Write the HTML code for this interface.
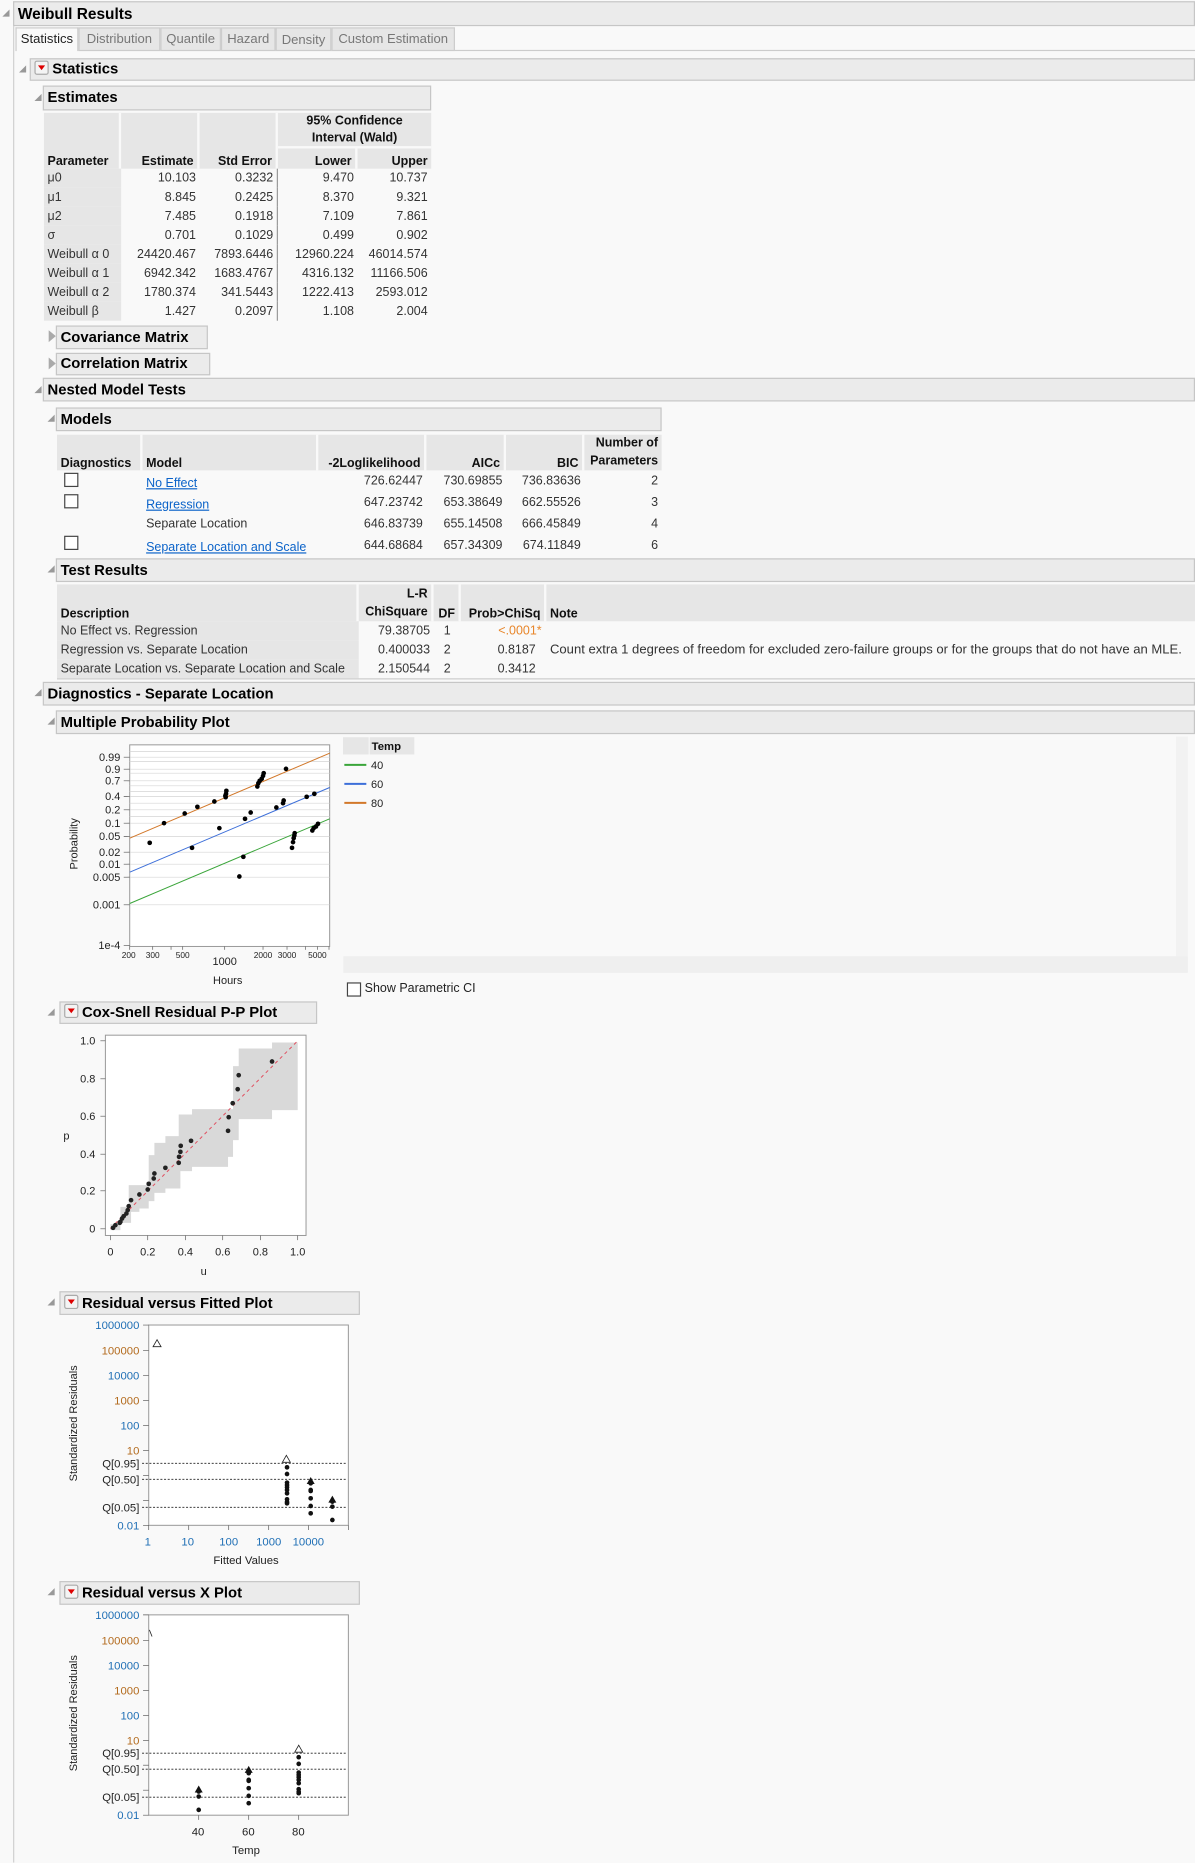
<!DOCTYPE html>
<html><head><meta charset="utf-8"><style>
html,body{margin:0;padding:0;background:#f9f9f9;overflow:hidden;width:1195px;height:1862px}
#s{position:absolute;left:0;top:0;width:1006px;height:1568px;transform:scale(1.18787);transform-origin:0 0;font-family:"Liberation Sans",sans-serif;font-size:10.5px;color:#222}
.a{position:absolute}
.hd{position:absolute;background:#ebebeb;border:1px solid #c6c6c6;box-sizing:border-box;font-weight:bold;font-size:12.5px;color:#000;padding-left:3px;line-height:17px;white-space:nowrap}
.tri{position:absolute;width:0;height:0;border-left:6px solid transparent;border-bottom:6px solid #999}
.rt{position:absolute;width:0;height:0;border-top:5px solid transparent;border-bottom:5px solid transparent;border-left:6px solid #aaa}
.menu{display:inline-block;width:10px;height:10px;border:1px solid #aaa;border-radius:2px;background:#f4f4f4;position:relative;vertical-align:-1px;margin-right:3px}
.menu:after{content:"";position:absolute;left:2px;top:3px;border-left:3px solid transparent;border-right:3px solid transparent;border-top:4px solid #d00}
.tab{position:absolute;top:23px;height:20px;background:#e6e6e6;border:1px solid #ccc;box-sizing:border-box;color:#777;font-size:11px;line-height:19px;text-align:center}
table{border-collapse:separate;border-spacing:0;font-size:10.5px;position:absolute}
td,th{padding:0 3px;white-space:nowrap}
th{background:#e6e6e6;font-weight:bold;color:#111;vertical-align:bottom;border-right:2px solid #f9f9f9}
td{text-align:right;color:#333}
td.l{text-align:left}
td.g{background:#e6e6e6;text-align:left}
a{color:#0b63c9;text-decoration:underline}
.cb{display:inline-block;width:10px;height:10px;border:1px solid #444;background:#fff}
</style></head><body><div id="s">
<div class="a" style="left:11px;top:21px;width:1px;height:1547px;background:#d0d0d0"></div>
<div class="tri" style="left:2px;top:8px"></div>
<div class="hd" style="left:11px;top:1px;width:995px;height:21px;line-height:19px;font-size:13px">Weibull Results</div>

<div class="tab" style="left:13px;width:53px;background:#f9f9f9;color:#222;border-bottom:none">Statistics</div>
<div class="tab" style="left:66px;width:69px">Distribution</div>
<div class="tab" style="left:135px;width:51px">Quantile</div>
<div class="tab" style="left:186px;width:46px">Hazard</div>
<div class="tab" style="left:232px;width:47px;line-height:21px">Density</div>
<div class="tab" style="left:279px;width:104px">Custom Estimation</div>
<div class="a" style="left:383px;top:42px;width:623px;height:1px;background:#ccc"></div>

<div class="tri" style="left:16px;top:55px"></div>
<div class="hd" style="left:25px;top:49px;width:981px;height:19px"><span class="menu"></span>Statistics</div>

<div class="tri" style="left:29px;top:79px"></div>
<div class="hd" style="left:36px;top:72px;width:327px;height:21px;line-height:19px">Estimates</div>

<table style="left:37px;top:95px;width:326px">
<tr style="height:29px"><th rowspan="2" style="text-align:left;width:57px">Parameter</th><th rowspan="2" style="text-align:right;width:58px">Estimate</th><th rowspan="2" style="text-align:right;width:58px">Std Error</th><th colspan="2" style="text-align:center;vertical-align:middle;border-bottom:2px solid #f9f9f9;line-height:14px;border-right:none">95% Confidence<br>Interval (Wald)</th></tr>
<tr style="height:17px"><th style="text-align:right;width:59px">Lower</th><th style="text-align:right;border-right:none">Upper</th></tr>
<tr style="height:16px"><td class="g">μ0</td><td>10.103</td><td style="border-right:1px solid #999">0.3232</td><td>9.470</td><td>10.737</td></tr>
<tr style="height:16px"><td class="g">μ1</td><td>8.845</td><td style="border-right:1px solid #999">0.2425</td><td>8.370</td><td>9.321</td></tr>
<tr style="height:16px"><td class="g">μ2</td><td>7.485</td><td style="border-right:1px solid #999">0.1918</td><td>7.109</td><td>7.861</td></tr>
<tr style="height:16px"><td class="g">σ</td><td>0.701</td><td style="border-right:1px solid #999">0.1029</td><td>0.499</td><td>0.902</td></tr>
<tr style="height:16px"><td class="g">Weibull α 0</td><td>24420.467</td><td style="border-right:1px solid #999">7893.6446</td><td>12960.224</td><td>46014.574</td></tr>
<tr style="height:16px"><td class="g">Weibull α 1</td><td>6942.342</td><td style="border-right:1px solid #999">1683.4767</td><td>4316.132</td><td>11166.506</td></tr>
<tr style="height:16px"><td class="g">Weibull α 2</td><td>1780.374</td><td style="border-right:1px solid #999">341.5443</td><td>1222.413</td><td>2593.012</td></tr>
<tr style="height:16px"><td class="g">Weibull β</td><td>1.427</td><td style="border-right:1px solid #999">0.2097</td><td>1.108</td><td>2.004</td></tr>
</table>

<div class="rt" style="left:41px;top:278px"></div>
<div class="hd" style="left:47px;top:274px;width:128px;height:20px;line-height:18px">Covariance Matrix</div>
<div class="rt" style="left:41px;top:301px"></div>
<div class="hd" style="left:47px;top:297px;width:130px;height:19px">Correlation Matrix</div>

<div class="tri" style="left:29px;top:325px"></div>
<div class="hd" style="left:36px;top:318px;width:970px;height:20px;line-height:18px">Nested Model Tests</div>

<div class="tri" style="left:40px;top:349px"></div>
<div class="hd" style="left:47px;top:343px;width:510px;height:20px;line-height:18px">Models</div>

<table style="left:48px;top:366px;width:509px">
<tr style="height:30px"><th style="text-align:left;width:64px">Diagnostics</th><th style="text-align:left;width:140px">Model</th><th style="text-align:right;width:83px">-2Loglikelihood</th><th style="text-align:right;width:59px">AICc</th><th style="text-align:right;width:58px">BIC</th><th style="text-align:right;border-right:none;line-height:15px">Number of<br>Parameters</th></tr>
<tr style="height:18px"><td class="l" style="padding-left:6px"><span class="cb"></span></td><td class="l" style="padding-top:3px"><a>No Effect</a></td><td>726.62447</td><td>730.69855</td><td>736.83636</td><td>2</td></tr>
<tr style="height:18px"><td class="l" style="padding-left:6px"><span class="cb"></span></td><td class="l" style="padding-top:4px"><a>Regression</a></td><td>647.23742</td><td>653.38649</td><td>662.55526</td><td>3</td></tr>
<tr style="height:17px"><td></td><td class="l">Separate Location</td><td>646.83739</td><td>655.14508</td><td>666.45849</td><td>4</td></tr>
<tr style="height:19px"><td class="l" style="padding-left:6px"><span class="cb"></span></td><td class="l" style="padding-top:4px"><a>Separate Location and Scale</a></td><td>644.68684</td><td>657.34309</td><td>674.11849</td><td>6</td></tr>
</table>

<div class="tri" style="left:40px;top:476px"></div>
<div class="hd" style="left:47px;top:470px;width:959px;height:20px;line-height:18px">Test Results</div>

<table style="left:48px;top:492px;width:958px">
<tr style="height:31px"><th style="text-align:left;width:246px">Description</th><th style="text-align:right;width:55px;line-height:15px">L-R<br>ChiSquare</th><th style="text-align:right;width:15px">DF</th><th style="text-align:right;width:64px">Prob&gt;ChiSq</th><th style="text-align:left;border-right:none">Note</th></tr>
<tr style="height:16px"><td class="g">No Effect vs. Regression</td><td>79.38705</td><td style="text-align:center">1</td><td style="color:#e8862a;padding-right:4px">&lt;.0001*</td><td class="l"></td></tr>
<tr style="height:16px"><td class="g">Regression vs. Separate Location</td><td>0.400033</td><td style="text-align:center">2</td><td style="padding-right:9px">0.8187</td><td class="l" style="font-size:11px">Count extra 1 degrees of freedom for excluded zero-failure groups or for the groups that do not have an MLE.</td></tr>
<tr style="height:16px"><td class="g">Separate Location vs. Separate Location and Scale</td><td>2.150544</td><td style="text-align:center">2</td><td style="padding-right:9px">0.3412</td><td class="l"></td></tr>
</table>
<div class="a" style="left:48px;top:571px;width:958px;height:1px;background:#ccc"></div>

<div class="tri" style="left:29px;top:580px"></div>
<div class="hd" style="left:36px;top:574px;width:970px;height:20px;line-height:18px">Diagnostics - Separate Location</div>

<div class="tri" style="left:40px;top:604px"></div>
<div class="hd" style="left:47px;top:598px;width:959px;height:20px;line-height:18px">Multiple Probability Plot</div>

<div class="a" style="left:289px;top:620px;width:711px;height:199px;background:#f9f9f9"></div>
<div class="a" style="left:990px;top:620px;width:10px;height:185px;background:#f2f2f2"></div>
<div class="a" style="left:289px;top:805px;width:711px;height:14px;background:#efefef"></div>
<div class="a" style="left:292px;top:827px;width:10px;height:10px;border:1px solid #444;background:#fff"></div>
<div class="a" style="left:307px;top:826px;font-size:10.5px;color:#222">Show Parametric CI</div>

<svg class="a" style="left:33.67px;top:606.1px" width="387.2" height="252.5" viewBox="0 0 1380 900" font-family="Liberation Sans, sans-serif">
<rect x="268" y="75" width="600" height="605" fill="#fff" stroke="#999" stroke-width="3"/>
<g stroke="#d4d4d4" stroke-width="2">
<line x1="268" x2="868" y1="95" y2="95"/><line x1="268" x2="868" y1="112" y2="112"/><line x1="268" x2="868" y1="125" y2="125"/><line x1="268" x2="868" y1="148" y2="148"/><line x1="268" x2="868" y1="160" y2="160"/><line x1="268" x2="868" y1="183" y2="183"/><line x1="268" x2="868" y1="198" y2="198"/><line x1="268" x2="868" y1="215" y2="215"/><line x1="268" x2="868" y1="230" y2="230"/><line x1="268" x2="868" y1="250" y2="250"/><line x1="268" x2="868" y1="270" y2="270"/><line x1="268" x2="868" y1="290" y2="290"/><line x1="268" x2="868" y1="310" y2="310"/><line x1="268" x2="868" y1="350" y2="350"/><line x1="268" x2="868" y1="397" y2="397"/><line x1="268" x2="868" y1="433" y2="433"/><line x1="268" x2="868" y1="472" y2="472"/><line x1="268" x2="868" y1="555" y2="555"/>
</g>
<g stroke="#555" stroke-width="2">
<line x1="250" x2="268" y1="112" y2="112"/><line x1="250" x2="268" y1="148" y2="148"/><line x1="250" x2="268" y1="183" y2="183"/><line x1="250" x2="268" y1="230" y2="230"/><line x1="250" x2="268" y1="270" y2="270"/><line x1="250" x2="268" y1="310" y2="310"/><line x1="250" x2="268" y1="350" y2="350"/><line x1="250" x2="268" y1="397" y2="397"/><line x1="250" x2="268" y1="433" y2="433"/><line x1="250" x2="268" y1="472" y2="472"/><line x1="250" x2="268" y1="555" y2="555"/><line x1="250" x2="268" y1="677" y2="677"/>
<line x1="268" x2="268" y1="680" y2="690"/><line x1="337" x2="337" y1="680" y2="690"/><line x1="392" x2="392" y1="680" y2="690"/><line x1="427" x2="427" y1="680" y2="690"/><line x1="553" x2="553" y1="680" y2="690"/><line x1="668" x2="668" y1="680" y2="690"/><line x1="740" x2="740" y1="680" y2="690"/><line x1="796" x2="796" y1="680" y2="690"/><line x1="831" x2="831" y1="680" y2="690"/><line x1="866" x2="866" y1="680" y2="690"/>
</g>
<g font-size="33" fill="#222" text-anchor="end">
<text x="240" y="123">0.99</text><text x="240" y="159">0.9</text><text x="240" y="194">0.7</text><text x="240" y="241">0.4</text><text x="240" y="281">0.2</text><text x="240" y="321">0.1</text><text x="240" y="361">0.05</text><text x="240" y="408">0.02</text><text x="240" y="444">0.01</text><text x="240" y="483">0.005</text><text x="240" y="566">0.001</text><text x="240" y="688">1e-4</text>
</g>
<g font-size="25" fill="#222" text-anchor="middle">
<text x="265" y="715">200</text><text x="337" y="715">300</text><text x="427" y="715">500</text><text x="668" y="715">2000</text><text x="740" y="715">3000</text><text x="831" y="715">5000</text>
</g>
<text x="553" y="736" font-size="33" text-anchor="middle" fill="#222">1000</text>
<text x="562" y="793" font-size="33" text-anchor="middle" fill="#222">Hours</text>
<text transform="translate(111,372) rotate(-90)" font-size="33" text-anchor="middle" fill="#222">Probability</text>
<line x1="268" y1="355" x2="868" y2="100" stroke="#d2782a" stroke-width="3"/>
<line x1="268" y1="457" x2="868" y2="203" stroke="#3d6fd9" stroke-width="3"/>
<line x1="268" y1="551" x2="868" y2="297" stroke="#3aa53a" stroke-width="3"/>
<g fill="#000">
<circle cx="328" cy="369" r="7"/><circle cx="371" cy="310" r="7"/><circle cx="433" cy="281" r="7"/><circle cx="471" cy="261" r="7"/><circle cx="522" cy="245" r="7"/><circle cx="537" cy="325" r="7"/><circle cx="455" cy="384" r="7"/><circle cx="556" cy="232" r="7"/><circle cx="557" cy="222" r="7"/><circle cx="558" cy="213" r="7"/><circle cx="555" cy="228" r="7"/><circle cx="651" cy="200" r="7"/><circle cx="654" cy="190" r="7"/><circle cx="658" cy="183" r="7"/><circle cx="664" cy="177" r="7"/><circle cx="668" cy="168" r="7"/><circle cx="670" cy="160" r="7"/><circle cx="737" cy="147" r="7"/>
<circle cx="597" cy="470" r="7"/><circle cx="609" cy="411" r="7"/><circle cx="614" cy="297" r="7"/><circle cx="631" cy="278" r="7"/><circle cx="708" cy="263" r="7"/><circle cx="728" cy="250" r="7"/><circle cx="730" cy="242" r="7"/><circle cx="799" cy="231" r="7"/><circle cx="822" cy="222" r="7"/><circle cx="755" cy="384" r="7"/><circle cx="758" cy="367" r="7"/><circle cx="760" cy="355" r="7"/><circle cx="762" cy="347" r="7"/><circle cx="763" cy="340" r="7"/><circle cx="816" cy="332" r="7"/><circle cx="820" cy="325" r="7"/><circle cx="827" cy="320" r="7"/><circle cx="833" cy="312" r="7"/>
</g>
<rect x="908" y="52" width="77" height="52" fill="#e6e6e6"/>
<rect x="988" y="52" width="134" height="52" fill="#e6e6e6"/>
<text x="994" y="91" font-size="34" font-weight="bold" fill="#111">Temp</text>
<line x1="912" x2="978" y1="135" y2="135" stroke="#3aa53a" stroke-width="6"/>
<line x1="912" x2="978" y1="192" y2="192" stroke="#3d6fd9" stroke-width="6"/>
<line x1="912" x2="978" y1="249" y2="249" stroke="#d2782a" stroke-width="6"/>
<g font-size="33" fill="#222"><text x="992" y="147">40</text><text x="992" y="204">60</text><text x="992" y="261">80</text></g>
</svg>

<div class="tri" style="left:40px;top:849px"></div>
<div class="hd" style="left:50px;top:843px;width:217px;height:19px"><span class="menu"></span>Cox-Snell Residual P-P Plot</div>

<svg class="a" style="left:33.67px;top:841.8px" width="252.55" height="244.1" viewBox="0 0 900 870" font-family="Liberation Sans, sans-serif">
<rect x="195" y="105" width="602" height="601" fill="#fff" stroke="#999" stroke-width="3"/>
<polygon fill="#d9d9d9" points="210,672 240,672 240,620 265,620 265,555 325,555 325,465 342,465 342,428 375,428 375,408 415,408 415,343 455,343 455,327 578,327 578,198 595,198 595,145 695,145 695,127 772,127 772,330 695,330 695,357 595,357 595,420 578,420 578,470 563,470 563,500 455,500 455,513 420,513 420,565 375,565 375,578 342,578 342,603 325,603 325,625 297,625 297,635 272,635 272,668 240,668 240,690 210,690"/>
<line x1="210" y1="685" x2="772" y2="122" stroke="#e05060" stroke-width="3" stroke-dasharray="10,10"/>
<g fill="#222">
<circle cx="218" cy="683" r="7"/><circle cx="225" cy="675" r="7"/><circle cx="240" cy="665" r="7"/><circle cx="238" cy="668" r="7"/><circle cx="245" cy="655" r="7"/><circle cx="250" cy="648" r="7"/><circle cx="258" cy="640" r="7"/><circle cx="262" cy="630" r="7"/><circle cx="265" cy="618" r="7"/><circle cx="272" cy="600" r="7"/><circle cx="297" cy="583" r="7"/><circle cx="322" cy="568" r="7"/><circle cx="325" cy="551" r="7"/><circle cx="340" cy="535" r="7"/><circle cx="342" cy="520" r="7"/><circle cx="375" cy="503" r="7"/><circle cx="415" cy="488" r="7"/><circle cx="416" cy="470" r="7"/><circle cx="420" cy="455" r="7"/><circle cx="421" cy="437" r="7"/><circle cx="452" cy="422" r="7"/><circle cx="563" cy="392" r="7"/><circle cx="565" cy="351" r="7"/><circle cx="577" cy="309" r="7"/><circle cx="592" cy="267" r="7"/><circle cx="595" cy="225" r="7"/><circle cx="695" cy="184" r="7"/>
</g>
<g stroke="#555" stroke-width="2">
<line x1="180" x2="195" y1="122" y2="122"/><line x1="180" x2="195" y1="236" y2="236"/><line x1="180" x2="195" y1="348" y2="348"/><line x1="180" x2="195" y1="462" y2="462"/><line x1="180" x2="195" y1="572" y2="572"/><line x1="180" x2="195" y1="686" y2="686"/>
<line x1="210" x2="210" y1="706" y2="720"/><line x1="322" x2="322" y1="706" y2="720"/><line x1="435" x2="435" y1="706" y2="720"/><line x1="547" x2="547" y1="706" y2="720"/><line x1="660" x2="660" y1="706" y2="720"/><line x1="772" x2="772" y1="706" y2="720"/>
</g>
<g font-size="33" fill="#222" text-anchor="end"><text x="165" y="133">1.0</text><text x="165" y="247">0.8</text><text x="165" y="359">0.6</text><text x="165" y="473">0.4</text><text x="165" y="583">0.2</text><text x="165" y="697">0</text></g>
<g font-size="33" fill="#222" text-anchor="middle"><text x="210" y="766">0</text><text x="322" y="766">0.2</text><text x="435" y="766">0.4</text><text x="547" y="766">0.6</text><text x="660" y="766">0.8</text><text x="772" y="766">1.0</text>
<text x="490" y="824">u</text><text x="78" y="418">p</text></g>
</svg>

<div class="tri" style="left:40px;top:1093px"></div>
<div class="hd" style="left:50px;top:1087px;width:253px;height:20px;line-height:18px"><span class="menu"></span>Residual versus Fitted Plot</div>

<svg class="a" style="left:33.67px;top:1085.9px" width="277.8" height="244.1" viewBox="0 0 990 870" font-family="Liberation Sans, sans-serif">
<rect x="325" y="105" width="599" height="601" fill="#fff" stroke="#999" stroke-width="3"/>
<g stroke="#222" stroke-width="2.5" stroke-dasharray="6,5"><line x1="305" x2="920" y1="520" y2="520"/><line x1="305" x2="920" y1="568" y2="568"/><line x1="305" x2="920" y1="652" y2="652"/></g>
<g stroke="#555" stroke-width="2"><line x1="308" x2="325" y1="105" y2="105"/><line x1="308" x2="325" y1="182" y2="182"/><line x1="308" x2="325" y1="257" y2="257"/><line x1="308" x2="325" y1="332" y2="332"/><line x1="308" x2="325" y1="407" y2="407"/><line x1="308" x2="325" y1="482" y2="482"/><line x1="308" x2="325" y1="556" y2="556"/><line x1="308" x2="325" y1="631" y2="631"/><line x1="308" x2="325" y1="706" y2="706"/>
<line x1="325" x2="325" y1="706" y2="720"/><line x1="445" x2="445" y1="706" y2="720"/><line x1="565" x2="565" y1="706" y2="720"/><line x1="685" x2="685" y1="706" y2="720"/><line x1="804" x2="804" y1="706" y2="720"/><line x1="924" x2="924" y1="706" y2="720"/></g>
<g font-size="34" text-anchor="end"><text x="297" y="117" fill="#1f6fb5">1000000</text><text x="297" y="194" fill="#b36b1e">100000</text><text x="297" y="269" fill="#1f6fb5">10000</text><text x="297" y="344" fill="#b36b1e">1000</text><text x="297" y="419" fill="#1f6fb5">100</text><text x="297" y="494" fill="#b36b1e">10</text><text x="297" y="532" fill="#222">Q[0.95]</text><text x="297" y="580" fill="#222">Q[0.50]</text><text x="297" y="664" fill="#222">Q[0.05]</text><text x="297" y="718" fill="#1f6fb5">0.01</text></g>
<g font-size="34" text-anchor="middle" fill="#1f6fb5"><text x="322" y="767">1</text><text x="442" y="767">10</text><text x="565" y="767">100</text><text x="685" y="767">1000</text><text x="804" y="767">10000</text></g>
<text x="617" y="822" font-size="34" text-anchor="middle" fill="#222">Fitted Values</text>
<text transform="translate(110,400) rotate(-90)" font-size="33" text-anchor="middle" fill="#222">Standardized Residuals</text>
<g fill="none" stroke="#222" stroke-width="2.5"><polygon points="350,149 338,170 362,170"/><polygon points="738,496 726,517 750,517"/></g>
<g fill="#111"><circle cx="740" cy="532" r="7"/><circle cx="740" cy="552" r="7"/><circle cx="740" cy="578" r="7"/><circle cx="740" cy="585" r="7"/><circle cx="740" cy="592" r="7"/><circle cx="740" cy="600" r="7"/><circle cx="740" cy="610" r="7"/><circle cx="740" cy="628" r="7"/><circle cx="740" cy="636" r="7"/><circle cx="740" cy="640" r="7"/>
<polygon points="811,561 799,582 823,582"/><circle cx="811" cy="580" r="7"/><circle cx="811" cy="600" r="7"/><circle cx="811" cy="603" r="7"/><circle cx="811" cy="625" r="7"/><circle cx="811" cy="648" r="7"/><circle cx="811" cy="670" r="7"/>
<polygon points="876,617 864,638 888,638"/><circle cx="876" cy="635" r="7"/><circle cx="876" cy="650" r="7"/><circle cx="876" cy="690" r="7"/></g>
</svg>

<div class="tri" style="left:40px;top:1337px"></div>
<div class="hd" style="left:50px;top:1331px;width:253px;height:20px;line-height:18px"><span class="menu"></span>Residual versus X Plot</div>

<svg class="a" style="left:33.67px;top:1330.1px" width="277.8" height="237.4" viewBox="0 0 990 846" font-family="Liberation Sans, sans-serif">
<rect x="325" y="105" width="599" height="601" fill="#fff" stroke="#999" stroke-width="3"/>
<g stroke="#222" stroke-width="2.5" stroke-dasharray="6,5"><line x1="305" x2="920" y1="520" y2="520"/><line x1="305" x2="920" y1="568" y2="568"/><line x1="305" x2="920" y1="652" y2="652"/></g>
<g stroke="#555" stroke-width="2"><line x1="308" x2="325" y1="105" y2="105"/><line x1="308" x2="325" y1="182" y2="182"/><line x1="308" x2="325" y1="257" y2="257"/><line x1="308" x2="325" y1="332" y2="332"/><line x1="308" x2="325" y1="407" y2="407"/><line x1="308" x2="325" y1="482" y2="482"/><line x1="308" x2="325" y1="556" y2="556"/><line x1="308" x2="325" y1="631" y2="631"/><line x1="308" x2="325" y1="706" y2="706"/>
<line x1="475" x2="475" y1="706" y2="720"/><line x1="625" x2="625" y1="706" y2="720"/><line x1="775" x2="775" y1="706" y2="720"/></g>
<g font-size="34" text-anchor="end"><text x="297" y="117" fill="#1f6fb5">1000000</text><text x="297" y="194" fill="#b36b1e">100000</text><text x="297" y="269" fill="#1f6fb5">10000</text><text x="297" y="344" fill="#b36b1e">1000</text><text x="297" y="419" fill="#1f6fb5">100</text><text x="297" y="494" fill="#b36b1e">10</text><text x="297" y="532" fill="#222">Q[0.95]</text><text x="297" y="580" fill="#222">Q[0.50]</text><text x="297" y="664" fill="#222">Q[0.05]</text><text x="297" y="718" fill="#1f6fb5">0.01</text></g>
<g font-size="34" text-anchor="middle" fill="#222"><text x="473" y="767">40</text><text x="624" y="767">60</text><text x="774" y="767">80</text></g>
<text x="617" y="822" font-size="34" text-anchor="middle" fill="#222">Temp</text>
<text transform="translate(110,400) rotate(-90)" font-size="33" text-anchor="middle" fill="#222">Standardized Residuals</text>
<g fill="none" stroke="#222" stroke-width="2.5"><polyline points="327,150 335,170"/><polygon points="775,496 763,517 787,517"/></g>
<g fill="#111"><circle cx="775" cy="532" r="7"/><circle cx="775" cy="552" r="7"/><circle cx="775" cy="578" r="7"/><circle cx="775" cy="585" r="7"/><circle cx="775" cy="592" r="7"/><circle cx="775" cy="600" r="7"/><circle cx="775" cy="610" r="7"/><circle cx="775" cy="628" r="7"/><circle cx="775" cy="636" r="7"/><circle cx="775" cy="640" r="7"/>
<polygon points="625,558 613,579 637,579"/><circle cx="625" cy="580" r="7"/><circle cx="625" cy="600" r="7"/><circle cx="625" cy="603" r="7"/><circle cx="625" cy="625" r="7"/><circle cx="625" cy="648" r="7"/><circle cx="625" cy="670" r="7"/>
<polygon points="475,617 463,638 487,638"/><circle cx="475" cy="635" r="7"/><circle cx="475" cy="650" r="7"/><circle cx="475" cy="690" r="7"/></g>
</svg>
</div></body></html>
